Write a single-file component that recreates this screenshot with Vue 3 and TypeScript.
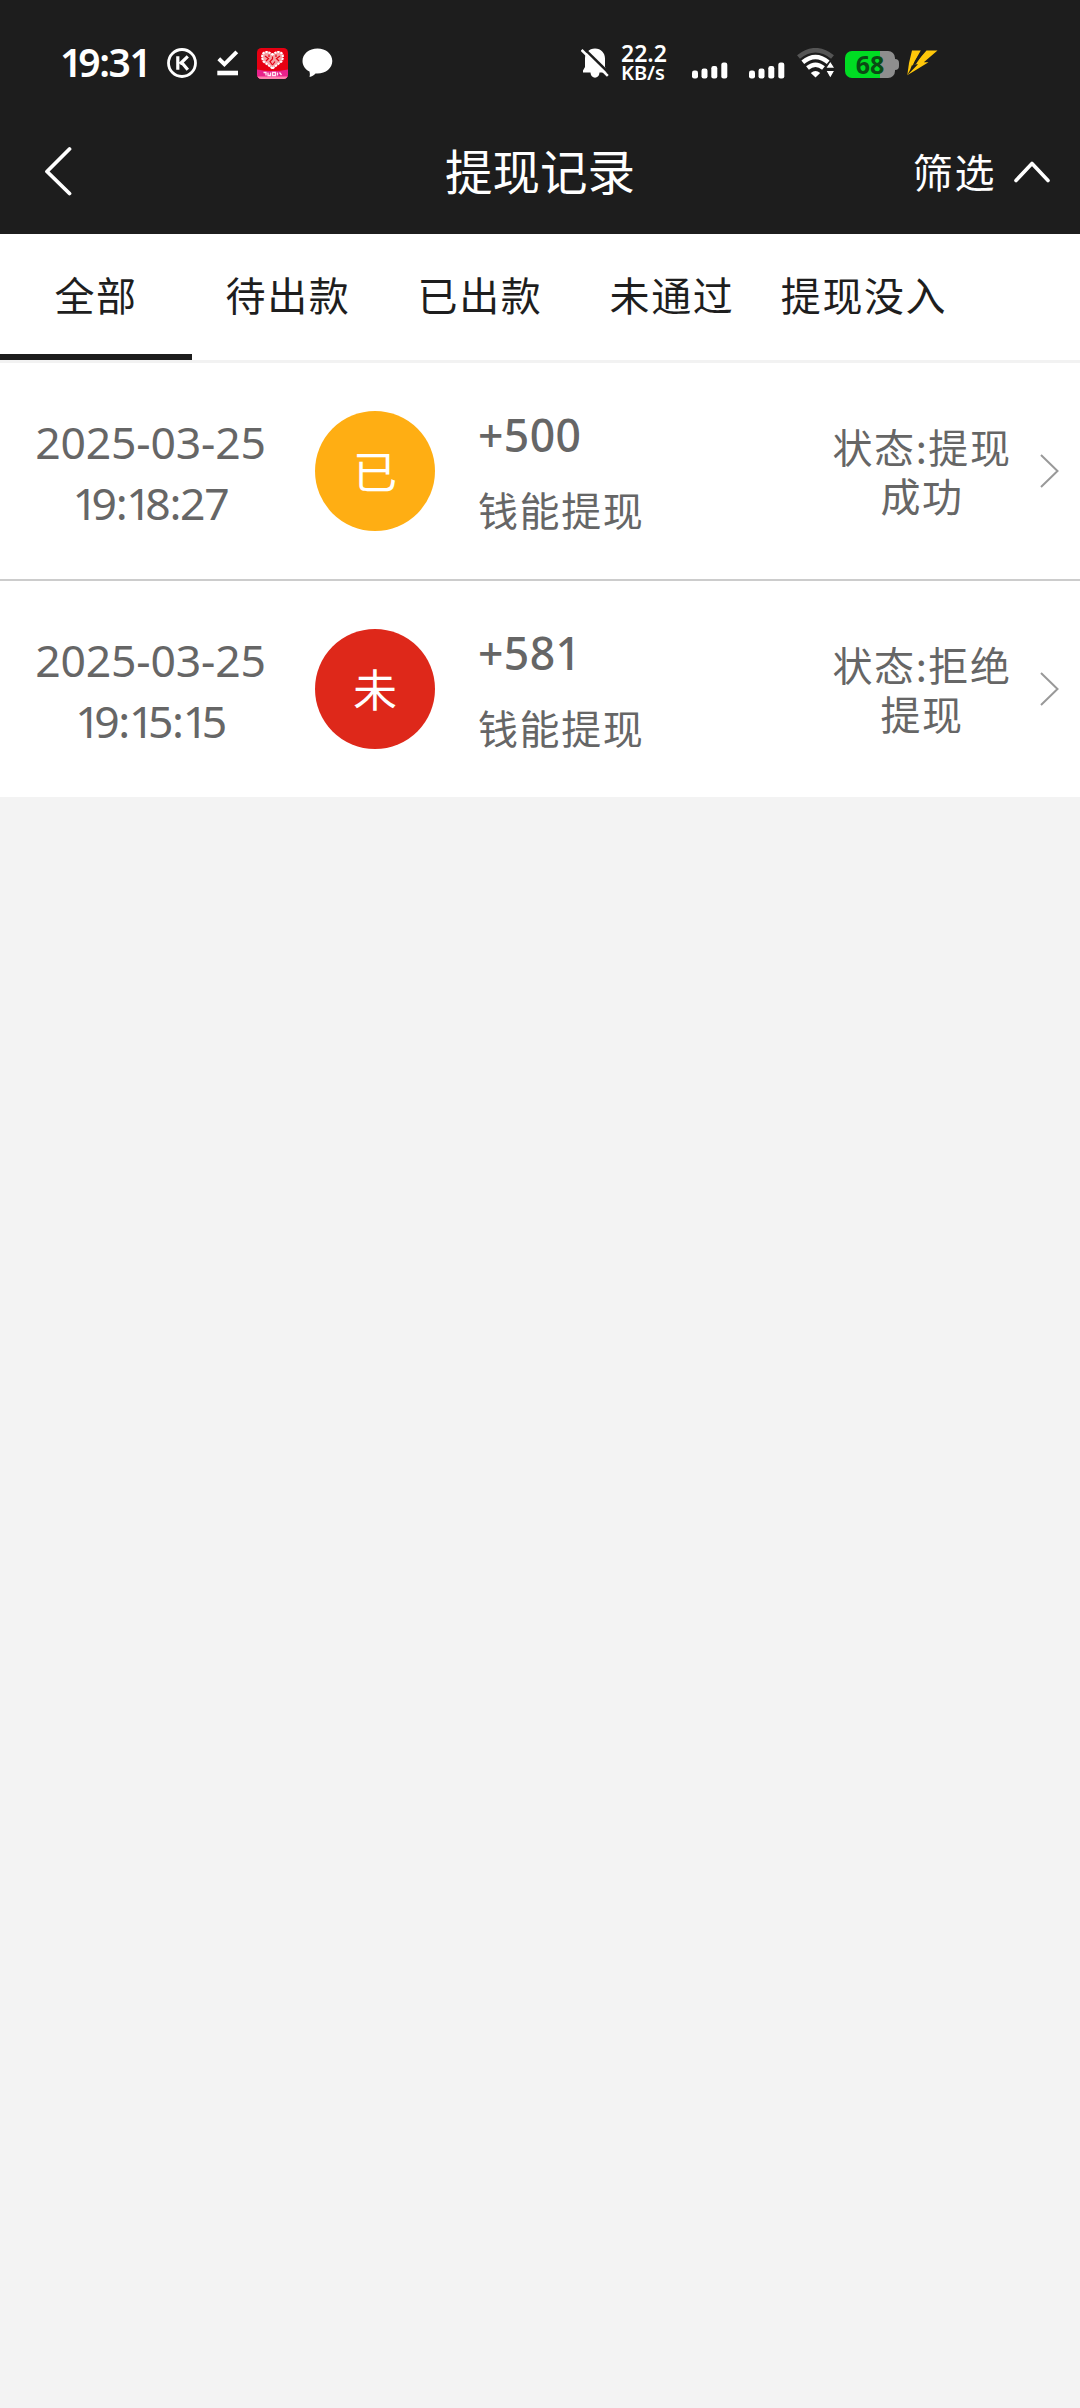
<script setup lang="ts">
interface WithdrawRecord {
  date: string
  time: string
  badge: string
  kind: 'paid' | 'rejected'
  amount: string
  channel: string
  status: [string, string]
}

const tabs: string[] = ['全部', '待出款', '已出款', '未通过', '提现没入']
const activeTab = 0

const records: WithdrawRecord[] = [
  {
    date: '2025-03-25',
    time: '19:18:27',
    badge: '已',
    kind: 'paid',
    amount: '+500',
    channel: '钱能提现',
    status: ['状态:提现', '成功'],
  },
  {
    date: '2025-03-25',
    time: '19:15:15',
    badge: '未',
    kind: 'rejected',
    amount: '+581',
    channel: '钱能提现',
    status: ['状态:拒绝', '提现'],
  },
]

// Splits a time so the digit 1 can be set narrower than the other figures.
const figures = (text: string): string[] => text.split(/(1)/).filter(Boolean)
</script>

<template>
  <div class="page">
    <header class="header">
      <div class="statusbar">
        <span class="clock"><i v-for="(p, i) in figures('19:31')" :key="i" :class="{ one: p === '1' }">{{ p }}</i></span>
        <svg class="ic-k" width="32" height="32" viewBox="0 0 32 32" fill="none" stroke="#fff">
          <circle cx="16" cy="16" r="13.500" stroke-width="2.800" />
          <path d="M11.800 9.300V22.700M21.800 9.300L14 17M15.500 15.300L21.800 22.700" stroke-width="3.200" />
        </svg>
        <svg class="ic-check" width="22" height="26" viewBox="0 0 22 26" fill="none" stroke="#fff">
          <path d="M1.800 8.800L7.400 14.300L19.800 1.800" stroke-width="4" />
          <path d="M.3 23H21" stroke-width="4.600" />
        </svg>
        <svg class="ic-app" width="31" height="31" viewBox="0 0 31 31">
          <defs>
            <clipPath id="appClip"><rect width="31" height="31" rx="4.500" /></clipPath>
          </defs>
          <g clip-path="url(#appClip)">
            <rect width="31" height="31" fill="#e60012" />
            <path d="M0 21.500Q15.500 24.500 31 21.500V31H0Z" fill="#e8218b" />
            <path d="M0 28.500H31V31H0Z" fill="#ff7fae" />
            <path
              d="M15.500 20.500L6.500 13.500Q4 9 6 5.500Q9.500 2 15.500 6.500Q21.500 2 25 5.500Q27 9 24.500 13.500Z"
              fill="#f4a0a4" stroke="#fff" stroke-width="2" stroke-dasharray="2.400 .8"
            />
            <path
              d="M8 8L11.500 10.500L9 13M12 6.500V9M15.500 8.500V11L13 13.500L15.500 17M19 6.500V9M23 8L19.500 10.500L22 13M18 13.500L15.500 17"
              fill="none" stroke="#e60012" stroke-width="1.200"
            />
            <path d="M6.500 24.500H9V27.500M11 24.500V27.500H13.500V24.500M15.500 24.500H18.500V27.500H15.500ZM20.500 24.500V27.500M22.500 24.500L24.500 27" fill="none" stroke="#ffe6f1" stroke-width="1.300" />
          </g>
        </svg>
        <svg class="ic-chat" width="31" height="30" viewBox="0 0 31 30">
          <path
            d="M15.500 .5C23.800 .5 30.300 5.800 30.300 13C30.300 20.200 23.800 25.500 15.500 25.500C14.800 25.500 14.200 25.500 13.500 25.400C12 27 9.800 28.500 7.600 29C8 27.300 8 25.500 7.500 23.600C3.300 21.400 .5 17.600 .5 13C.5 5.800 7.200 .5 15.500 .5Z"
            fill="#fff"
          />
        </svg>

        <svg class="ic-bell" width="28" height="31" viewBox="0 0 28 31">
          <path
            d="M14 .5C20 .5 24 5 24 10.500V19L26 22.500V24.500H2V22.500L4 19V10.500C4 5 8 .5 14 .5Z"
            fill="#fff"
          />
          <path d="M9.500 24H18.500C18.500 31.500 9.500 31.500 9.500 24Z" fill="#fff" />
          <path d="M2.800 .4L28.500 25.600" stroke="#1d1d1d" stroke-width="2.600" />
          <path d="M.6 2L26.800 27.800" stroke="#fff" stroke-width="2.500" />
        </svg>
        <div class="speed">
          <span class="speed-num">22.2</span>
          <span class="speed-unit">KB/s</span>
        </div>
        <svg v-for="n in 2" :key="n" class="ic-signal" width="36" height="17" viewBox="0 0 36 17" fill="#fff">
          <rect x="0" y="8.500" width="6" height="8" rx="2.200" />
          <rect x="9.500" y="6.500" width="6" height="10" rx="2.200" />
          <rect x="19.300" y="4" width="6" height="12.500" rx="2.200" />
          <rect x="29.300" y=".5" width="6" height="16" rx="2.200" />
        </svg>
        <svg class="ic-wifi" width="38" height="30" viewBox="0 0 38 30" fill="none">
          <path d="M1.500 9Q18.500 -4.500 35.500 9" stroke="#555" stroke-width="4.600" />
          <path d="M5.800 14.300Q18.500 3.800 31.200 14.300" stroke="#fff" stroke-width="4.400" />
          <path d="M10.500 20Q18.500 13.500 26.500 20" stroke="#fff" stroke-width="4.400" />
          <path d="M13.800 25Q18.500 21 23.200 25L18.500 29.500Z" fill="#fff" />
          <path d="M33.300 13L38 20.300H28.600ZM33.300 30.500L38 22.300H28.600Z" fill="#fff" stroke="#1d1d1d" stroke-width="1.200" />
        </svg>
        <div class="battery">
          <div class="battery-body"><span class="battery-text">68</span></div>
          <div class="battery-tip"></div>
        </div>
        <svg class="ic-bolt" width="31" height="26" viewBox="0 0 31 26" fill="#ffc70a">
          <path d="M5 .5H13.800L7.800 11L6.500 14L4.500 16.500L4.800 13H2Z" />
          <path d="M19.500 .5H30.500L16.800 12.300H21.500L.3 25.300L11 14.300H7.500Z" />
          <path d="M16.500 .5H18L9 14H6.500L14.500 .5Z" fill="#1d1d1d" />
          <path d="M2 13H5.500L3.500 19L.3 25.300Z" />
        </svg>
      </div>

      <div class="navbar">
        <div class="nav-side">
          <svg class="back" width="30" height="50" viewBox="0 0 30 50" fill="none" stroke="#fff" stroke-width="3.800" stroke-linecap="round" stroke-linejoin="round">
            <path d="M26.500 3L4 25.500L26.500 47.500" />
          </svg>
        </div>
        <h1 class="title">提现记录</h1>
        <div class="nav-side nav-right">
          <span class="filter">筛选</span>
          <svg class="caret" width="38" height="24" viewBox="0 0 38 24" fill="none" stroke="#fff" stroke-width="3.600" stroke-linecap="round" stroke-linejoin="round">
            <path d="M3 21.500L19 4.500L35 21.500" />
          </svg>
        </div>
      </div>
    </header>

    <nav class="tabs">
      <div v-for="(tab, i) in tabs" :key="tab" class="tab" :class="{ active: i === activeTab }">
        <span>{{ tab }}</span>
      </div>
    </nav>

    <main class="list">
      <article v-for="r in records" :key="r.time" class="row">
        <div class="when">
          <span class="date">{{ r.date }}</span>
          <span class="time"><i v-for="(p, i) in figures(r.time)" :key="i" :class="{ one: p === '1' }">{{ p }}</i></span>
        </div>
        <div class="badge" :class="r.kind"><span>{{ r.badge }}</span></div>
        <div class="info">
          <span class="amount">{{ r.amount }}</span>
          <span class="channel">{{ r.channel }}</span>
        </div>
        <div class="status">
          <span v-for="line in r.status" :key="line">{{ line }}</span>
        </div>
        <svg class="chevron" width="20" height="34" viewBox="0 0 20 34" fill="none" stroke="#999" stroke-width="2">
          <path d="M1 1L17.500 17L1 33" />
        </svg>
      </article>
    </main>
  </div>
</template>

<style>
body {
  background: #f3f3f3;
}
</style>

<style scoped>
.page {
  width: 1080px;
  min-height: 2408px;
  background: #f3f3f3;
  font-family: 'Noto Sans CJK SC', sans-serif;
}
.page span,
.title {
  white-space: nowrap;
}
.page i {
  font-style: normal;
}
.header {
  height: 234px;
  background: #1d1d1d;
  color: #fff;
}
.statusbar {
  display: flex;
  align-items: center;
  height: 90px;
  padding: 18px 0 0 60px;
}
.statusbar svg {
  flex: none;
}
.clock {
  width: 89px;
  margin-right: 17px;
  padding-bottom: 2px;
  font: 600 39px/44px 'Noto Sans', sans-serif;
  letter-spacing: -1.4px;
}
.clock .one {
  letter-spacing: -4px;
}
.ic-check {
  margin-left: 19px;
}
.ic-app {
  margin-left: 18px;
}
.ic-chat {
  margin-left: 14px;
}
.ic-bell {
  margin-left: 248px;
}
.speed {
  display: flex;
  flex-direction: column;
  width: 46px;
  margin-left: 12px;
  font-family: 'Noto Sans', sans-serif;
  font-weight: 600;
}
.speed-num {
  font-size: 23px;
  line-height: 20px;
}
.speed-unit {
  font-size: 20px;
  line-height: 20px;
}
.ic-signal {
  margin: 14px 0 0 25px;
}
.ic-signal + .ic-signal {
  margin-left: 21px;
}
.ic-wifi {
  margin-left: 12px;
}
.battery {
  display: flex;
  align-items: center;
  margin: 3px 0 0 10px;
}
.battery-body {
  display: flex;
  align-items: center;
  justify-content: center;
  width: 50px;
  height: 27px;
  border-radius: 7px;
  background: linear-gradient(90deg, #00dc23 35px, #8e8e8e 35px);
}
.battery-text {
  font: 700 25px/27px 'Noto Sans', sans-serif;
  color: #0b4a14;
}
.battery-tip {
  width: 4px;
  height: 11px;
  border-radius: 0 4px 4px 0;
  background: #8e8e8e;
}
.ic-bolt {
  margin-left: 8px;
}
.navbar {
  display: flex;
  align-items: center;
  height: 126px;
}
.nav-side {
  display: flex;
  flex: 1 1 0;
  align-items: center;
}
.back {
  margin-left: 43px;
}
.title {
  margin: 0;
  padding-bottom: 2px;
  font-size: 47.500px;
  font-weight: 400;
  line-height: 60px;
}
.nav-right {
  justify-content: flex-end;
}
.filter {
  margin-right: 17px;
  font-size: 40px;
  line-height: 60px;
  letter-spacing: 1.6px;
}
.caret {
  margin-right: 29px;
}
.tabs {
  display: flex;
  height: 126px;
  border-bottom: 3px solid #f2f2f2;
  background: #fff;
}
.tab {
  display: flex;
  align-items: center;
  justify-content: center;
  box-sizing: border-box;
  width: 192px;
  border-bottom: 6px solid transparent;
  font-size: 40px;
  letter-spacing: 1.6px;
  color: #1e1e1e;
}
.tab.active {
  border-bottom-color: #1d1d1d;
}
.row {
  display: flex;
  align-items: center;
  height: 216px;
  background: #fff;
  color: #666;
}
.row + .row {
  border-top: 2px solid #ccc;
}
.when {
  display: flex;
  flex-direction: column;
  align-items: center;
  width: 301px;
  padding-top: 2px;
  font: 400 44.500px/61px 'Noto Sans', sans-serif;
}
.date {
  letter-spacing: -0.2px;
}
.time {
  letter-spacing: -1.3px;
}
.time .one {
  letter-spacing: -6.5px;
}
.badge {
  display: flex;
  align-items: center;
  justify-content: center;
  width: 120px;
  height: 120px;
  margin-left: 14px;
  border-radius: 50%;
  font-size: 44px;
  line-height: 60px;
  color: #fff;
}
.badge span {
  padding-bottom: 3px;
}
.paid {
  background: #ffae13;
}
.rejected {
  background: #de281a;
}
.info {
  display: flex;
  flex-direction: column;
  width: 330px;
  margin-left: 43px;
  padding-top: 2px;
}
.amount {
  font: 500 44.500px/74px 'Noto Sans', sans-serif;
  letter-spacing: 0.4px;
}
.channel {
  font-size: 40px;
  line-height: 74px;
  letter-spacing: 1.6px;
}
.status {
  display: flex;
  flex-direction: column;
  align-items: center;
  width: 228px;
  font-size: 40px;
  line-height: 49px;
  letter-spacing: 1.6px;
}
.chevron {
  margin-left: 4px;
}
</style>
